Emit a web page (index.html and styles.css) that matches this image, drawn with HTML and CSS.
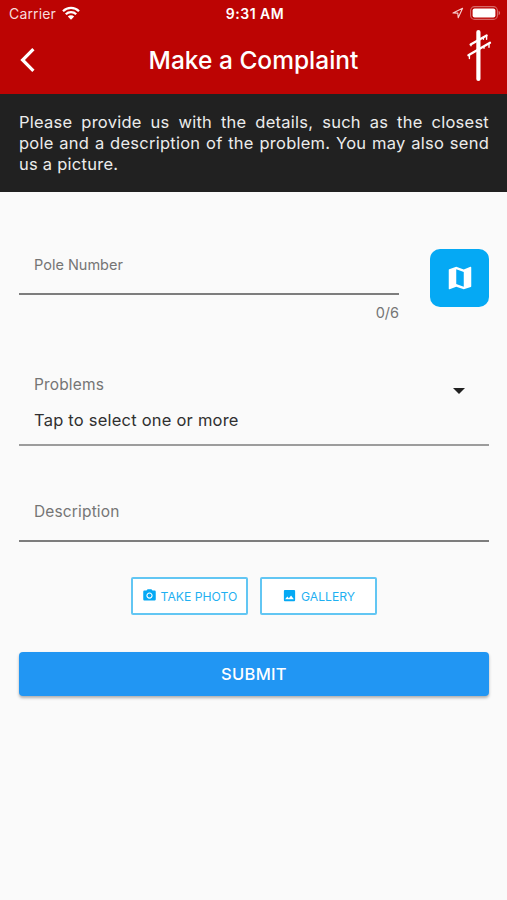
FILE: index.html
```html
<!DOCTYPE html>
<html lang="en">
<head>
  <meta charset="UTF-8">
  <meta name="viewport" content="width=device-width, initial-scale=1.0">
  <title>Make a Complaint</title>
  <link rel="stylesheet" href="styles.css">
</head>
<body>
  <header>
    <div class="status-bar">
      <div class="carrier">
        <span>Carrier</span>
        <svg class="wifi" viewBox="0 0 18 14">
          <path d="M1 5.2a11.4 11.4 0 0 1 16 0M3.8 8.3a7.4 7.4 0 0 1 10.4 0" fill="none" stroke="#fff" stroke-width="2.3"/>
          <path d="M5.8 10.5a4.6 4.6 0 0 1 6.4 0L9 13.8z" fill="#fff"/>
        </svg>
      </div>
      <div class="time">9:31 AM</div>
      <div class="status-icons">
        <svg class="location" viewBox="0 0 12 12">
          <path d="M1 6L10.6 1.2 6.2 10.8 5.8 6.1z" fill="none" stroke="#f7d0d0" stroke-width="1.1" stroke-linejoin="round"/>
        </svg>
        <svg class="battery" viewBox="0 0 31 14">
          <rect x=".6" y=".6" width="26.8" height="12.8" rx="4" fill="none" stroke="#fff" stroke-opacity=".4" stroke-width="1.1"/>
          <rect x="2.6" y="2.4" width="22.8" height="9.2" rx="2" fill="#fff"/>
          <path d="M28.6 4.8c2 .8 2 3.6 0 4.4z" fill="#fff" fill-opacity=".45"/>
        </svg>
      </div>
    </div>

    <div class="app-bar">
      <a class="back" href="#" aria-label="Back">
        <svg viewBox="0 0 16 24"><path d="M13.4 1.2L2.6 12l10.8 10.8" fill="none" stroke="#fff" stroke-width="3.2"/></svg>
      </a>
      <h1>Make a Complaint</h1>
      <!-- utility pole logo -->
      <svg class="logo" viewBox="0 0 26 54">
        <g fill="none" stroke="#fff" stroke-linecap="round">
          <path d="M12.4 3v47" stroke-width="4.2"/>
          <path d="M4.6 15.4L20.6 6.4M2.4 26.2L24 13.8" stroke-width="2.3"/>
          <path d="M5 15.4v1.4M20.6 6.8v3.4M3.4 26v3.6M23 14.6v3.6M17.4 8.6v1.6M18 17.6v1.6" stroke-width="1.4"/>
        </g>
      </svg>
    </div>
  </header>

  <p class="intro">Please provide us with the details, such as the closest pole and a description of the problem. You may also send us a picture.</p>

  <form class="complaint">
    <div class="pole-row">
      <div class="pole">
        <div class="field pole-field">Pole Number</div>
        <div class="counter">0/6</div>
      </div>
      <button type="button" class="map-btn" aria-label="Map">
        <svg viewBox="0 0 24 24"><path d="M20.5 3l-.16.03L15 5.1 9 3 3.36 4.9c-.21.07-.36.25-.36.48V20.5c0 .28.22.5.5.5l.16-.03L9 18.9l6 2.1 5.64-1.9c.21-.07.36-.25.36-.48V3.5c0-.28-.22-.5-.5-.5zM15 19l-6-2.11V5l6 2.11V19z" fill="#fff"/></svg>
      </button>
    </div>

    <div class="select">
      <div>
        <div class="label">Problems</div>
        <div class="value">Tap to select one or more</div>
      </div>
      <div class="arrow"></div>
    </div>

    <div class="field description">Description</div>

    <div class="photo-row">
      <button type="button" class="outline-btn">
        <svg viewBox="0 0 24 24"><path d="M9 2L7.17 4H4c-1.1 0-2 .9-2 2v12c0 1.1.9 2 2 2h16c1.1 0 2-.9 2-2V6c0-1.1-.9-2-2-2h-3.17L15 2H9zm3 15c-2.76 0-5-2.24-5-5s2.24-5 5-5 5 2.24 5 5-2.24 5-5 5z"/><circle cx="12" cy="12" r="3.2"/></svg>
        <span>TAKE PHOTO</span>
      </button>
      <button type="button" class="outline-btn">
        <svg viewBox="0 0 24 24"><path d="M21 19V5c0-1.1-.9-2-2-2H5c-1.1 0-2 .9-2 2v14c0 1.1.9 2 2 2h14c1.1 0 2-.9 2-2zM8.5 13.5l2.5 3.01L14.5 12l4.5 6H5l3.5-4.5z"/></svg>
        <span>GALLERY</span>
      </button>
    </div>

    <button type="button" class="submit">SUBMIT</button>
  </form>
</body>
</html>
```
FILE: styles.css
```css
* {
  box-sizing: border-box;
}

body {
  margin: 0;
  min-height: 100vh;
  background: #fafafa;
  font-family: Inter, "Liberation Sans", sans-serif;
  color: #303030;
}

button {
  font-family: inherit;
  padding: 0;
  border: none;
}

svg {
  display: block;
}

header {
  height: 94px;
  background: #bc0403;
  color: #fff;
}

.status-bar {
  display: grid;
  grid-template-columns: 1fr auto 1fr;
  align-items: center;
  height: 27px;
  padding: 0 6px 0 9px;
  font-size: 14px;
}

.carrier {
  display: flex;
  align-items: center;
  gap: 6px;
  color: #f7dcdc;
  letter-spacing: 0.15px;
}

.wifi {
  width: 18px;
  height: 14px;
  margin-top: -2px;
}

.time {
  font-weight: 600;
  font-size: 14px;
  letter-spacing: 0.5px;
}

.status-icons {
  display: flex;
  justify-content: flex-end;
  align-items: center;
  gap: 6px;
  margin-top: -1px;
}

.location {
  width: 12px;
  height: 12px;
}

.battery {
  width: 31px;
  height: 14px;
}

.app-bar {
  display: grid;
  grid-template-columns: 60px 1fr 60px;
  align-items: center;
  height: 67px;
}

.back svg {
  width: 16px;
  height: 24px;
  margin: -1px 0 0 20px;
}

h1 {
  margin: -2px 0 0;
  text-align: center;
  font-size: 24.5px;
  font-weight: 500;
  line-height: 64px;
}

.logo {
  width: 26px;
  height: 54px;
  margin: -9px 0 0 19px;
}

.intro {
  height: 98px;
  margin: 0;
  padding: 18px 18px 0 19px;
  background: #212121;
  color: #ececec;
  font-size: 16.5px;
  letter-spacing: 0.25px;
  line-height: 20.8px;
  text-align: justify;
}

.complaint {
  padding: 57px 18px 0 19px;
}

.field {
  padding-left: 15px;
  border-bottom: 2px solid #7d7d7d;
  color: #757575;
}

.pole-row {
  display: flex;
  gap: 31px;
  height: 79px;
}

.pole {
  flex: 1;
}

.pole-field {
  height: 46px;
  font-size: 14.5px;
  line-height: 32px;
}

.counter {
  text-align: right;
  font-size: 14.5px;
  line-height: 36px;
  color: #757575;
}

.map-btn {
  display: flex;
  align-items: center;
  justify-content: center;
  width: 59px;
  height: 58px;
  border-radius: 10px;
  background: #05a9f4;
}

.map-btn svg {
  width: 30px;
  height: 30px;
}

.select {
  display: flex;
  justify-content: space-between;
  height: 74px;
  margin-top: 44px;
  padding: 0 24px 0 15px;
  border-bottom: 2px solid #9c9c9c;
}

.label {
  padding-top: 1px;
  font-size: 15.5px;
  letter-spacing: 0.15px;
  line-height: 24px;
  color: #757575;
}

.value {
  margin-top: 11px;
  font-size: 16.5px;
  letter-spacing: 0.22px;
  line-height: 24px;
}

.arrow {
  width: 0;
  height: 0;
  margin-top: 16px;
  border-left: 6px solid transparent;
  border-right: 6px solid transparent;
  border-top: 6px solid #212121;
}

.description {
  height: 43px;
  margin-top: 53px;
  font-size: 15.5px;
  letter-spacing: 0.15px;
  line-height: 25px;
}

.photo-row {
  display: flex;
  justify-content: center;
  gap: 12px;
  margin-top: 35px;
}

.outline-btn {
  display: flex;
  align-items: center;
  justify-content: center;
  gap: 4px;
  width: 117px;
  height: 38px;
  border: 2px solid #62c6f3;
  border-radius: 2px;
  background: #fff;
  color: #1fb0f1;
  font-size: 12.2px;
}

.outline-btn svg {
  width: 15px;
  height: 15px;
  margin-top: -1px;
  fill: #05a9f4;
}

.submit {
  display: block;
  width: 100%;
  height: 44px;
  margin-top: 37px;
  border-radius: 4px;
  background: #2196f3;
  box-shadow: 0 2px 3px rgba(0, 0, 0, 0.3);
  color: #fff;
  font-size: 16.5px;
  font-weight: 500;
  letter-spacing: 0.3px;
}
```
